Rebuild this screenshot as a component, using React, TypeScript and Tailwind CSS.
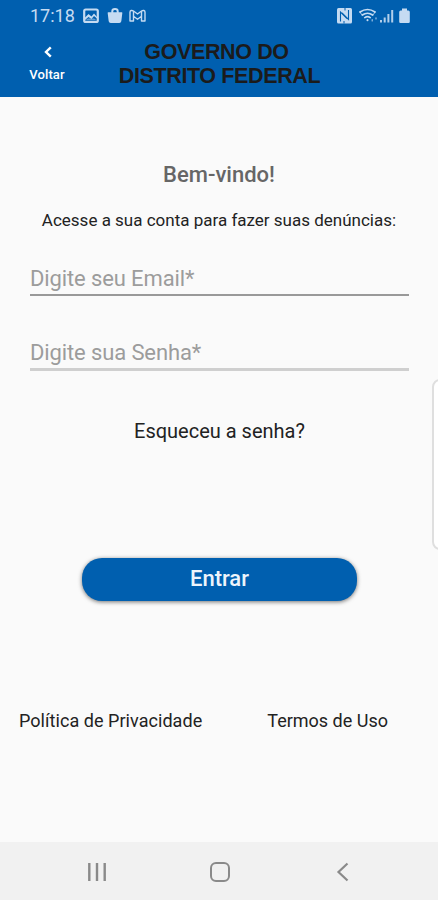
import React, { useState } from "react";

interface FieldProps {
  name: string;
  type: string;
  placeholder: string;
  className: string;
}

const StatusBar = () => {
  return <div className="flex h-8 items-center justify-between pl-[30px] pr-7 text-[#c5dbf2]">
    <div className="flex items-center">
      <span className="w-[53px] text-[18px] leading-8">17:18</span>
      <svg width="16" height="16" viewBox="0 0 16 16" fill="none">
        <rect x="1.200" y="1.500" width="13.600" height="12.500" rx="1.500" stroke="currentColor" strokeWidth="2.200" />
        <path d="M2 9.500 5.500 6l3 2.500L11 5.500l3 3.500v1.500L11 8l-2.500 3L5.500 9 2 12z" fill="currentColor" />
        <path d="M2 12.500 5 10.500h6l3 2z" fill="currentColor" opacity=".5" />
      </svg>
      <svg className="ml-2" width="16" height="16" viewBox="0 0 16 16" fill="none">
        <path d="M5.300 5V3.300a2.700 2.300 0 0 1 5.400 0V5" stroke="currentColor" strokeWidth="2" />
        <path d="M1.200 4.200h13.600q.7 0 .5 1l-1 8q-.3 1.800-2 1.800H3.700q-1.700 0-2-1.800l-1-8q-.2-1 .5-1z" fill="currentColor" />
      </svg>
      <svg className="ml-[6px]" width="17" height="16" viewBox="0 0 17 16" fill="none" stroke="currentColor" strokeWidth="1.400" strokeLinejoin="round">
        <path d="M1 13V4.200C1 2.300 3 2 4.500 3L8.500 6l4-3C14 2 16 2.300 16 4.200V13h-3.500V8.200L8.500 11.200l-4-3V13z" />
        <path d="M4.500 8.200V3M12.500 8.200V3" />
      </svg>
    </div>
    <div className="flex items-center">
      <svg className="mr-[1px]" width="15" height="16" viewBox="0 0 15 16">
        <rect width="15" height="15.500" rx="1.500" fill="currentColor" />
        <path d="M3.500 13.500V4l6.500 6.500M11.500 2v9.500L5 5" fill="none" stroke="#005faf" strokeWidth="1.100" />
        <path d="M8 0v2.500M7 13v2.500" stroke="#005faf" strokeWidth="1" />
      </svg>
      <svg className="ml-[6px]" width="20" height="16" viewBox="0 0 20 16" fill="none" stroke="currentColor" strokeWidth="1.700" strokeLinecap="round">
        <path d="M1 4q7.500-5 15 0M3.300 7q5.200-3.500 10.400 0M5.800 9.600q2.700-1.800 5.400 0" />
        <path d="M1 4q.8 1.800 2.300 3M16 4q-.8 1.800-2.300 3" strokeWidth="1" />
        <path d="M8.500 12v.2" strokeWidth="2" />
        <path d="M13.200 11.500v1.500M17 9.800v1.200" strokeWidth="1.200" opacity=".8" />
      </svg>
      <svg className="ml-[1px]" width="14" height="16" viewBox="0 0 14 16" fill="currentColor">
        <path d="M0 12h2v2.500H0zM3.700 9.500h2v5h-2zM7.400 6h2v8.500h-2zM11.200 2h2v12.500h-2z" opacity=".9" />
      </svg>
      <svg className="ml-[5px]" width="11" height="16" viewBox="0 0 11 16" fill="currentColor">
        <path d="M3 .5h5v2h1.300q1.500 0 1.500 1.500v9.800q0 1.200-1.200 1.200H1.400Q.2 15 .2 13.800V4q0-1.500 1.500-1.500H3z" />
      </svg>
    </div>
  </div>;
};

const Header = () => {
  return <header className="h-[97px] bg-[#005faf]">
    <StatusBar />
    <div className="flex">
      <button className="ml-[29px] flex w-9 flex-col items-center pt-[13px] text-white">
        <svg className="ml-[2px]" width="10" height="14" viewBox="0 0 10 14" fill="none" stroke="currentColor" strokeWidth="2.400">
          <path d="M7.800 2.300 3 7l4.800 4.700" />
        </svg>
        <span className="mt-[7px] whitespace-nowrap text-[13px] font-medium leading-[18px] tracking-[0.1px]">Voltar</span>
      </button>
      <h1 className="ml-[54px] mt-[8px] flex w-[201px] flex-col items-center whitespace-nowrap font-['Liberation_Sans',sans-serif] text-[21.500px] font-bold leading-6 tracking-[-0.380px] text-[#1b1b1b]">
        <span className="mr-[6px]">GOVERNO DO</span>
        <span>DISTRITO FEDERAL</span>
      </h1>
    </div>
  </header>;
};

const Field: React.FC<FieldProps> = ({ name, type, placeholder, className }) => {
  const [value, setValue] = useState("");

  return <input
    name={name}
    type={type}
    value={value}
    placeholder={placeholder}
    onChange={(e) => setValue(e.target.value)}
    className={`block w-full bg-transparent p-0 text-[22px] tracking-[-0.120px] text-[#333] outline-none placeholder:text-[#9c9c9c] ${className}`} />;
};

const NavigationBar = () => {
  return <nav className="flex h-[58px] items-center bg-[#f1f1f1] pt-[2px] text-[#8a8a8a]">
    <svg className="ml-[87px]" width="20" height="20" viewBox="0 0 20 20" stroke="currentColor" strokeWidth="2.400">
      <path d="M2.300 1v18M10 1v18M17.700 1v18" />
    </svg>
    <svg className="ml-[102px]" width="22" height="22" viewBox="0 0 22 22" fill="none" stroke="currentColor" strokeWidth="2">
      <rect x="2" y="2" width="18" height="18" rx="5" />
    </svg>
    <svg className="ml-[105px]" width="14" height="20" viewBox="0 0 14 20" fill="none" stroke="currentColor" strokeWidth="2.200">
      <path d="M11.500 1.500 2.500 10l9 8.500" />
    </svg>
  </nav>;
};

export default function App() {
  return <div className="relative flex h-[900px] w-[438px] flex-col overflow-hidden bg-[#fafafa] font-['Roboto',sans-serif]">
    <Header />
    <main className="flex flex-1 flex-col">
      <h2 className="mt-[63px] text-center text-[22px] font-medium leading-[30px] text-[#666]">Bem-vindo!</h2>
      <p className="mt-[18px] whitespace-nowrap text-center text-[17px] leading-6 text-[#222]">Acesse a sua conta para fazer suas denúncias:</p>
      <form className="flex flex-col pl-[30px] pr-[29px] pt-[31px]" onSubmit={(e) => e.preventDefault()}>
        <Field name="email" type="email" placeholder="Digite seu Email*" className="h-[33px] border-b-2 border-[#999] pb-[1px]" />
        <Field name="senha" type="password" placeholder="Digite sua Senha*" className="mt-[42px] h-[33px] border-b-[3px] border-[#cfcfcf] pb-[1px]" />
        <a href="#" className="mt-[46px] self-center text-[20px] leading-7 text-[#222]">Esqueceu a senha?</a>
        <button type="submit" className="mt-[113px] flex h-[43px] w-[275px] justify-center self-center rounded-[20px] bg-[#005faf] pt-[6px] text-[22px] font-medium leading-[30px] text-[#eef4fb] shadow-[0_1px_4px_rgba(0,0,0,0.55)]">Entrar</button>
      </form>
      <div className="mt-[108px] flex justify-between pl-[19px] pr-[50px] text-[18px] leading-6 text-[#222]">
        <a href="#" className="tracking-[0.050px]">Política de Privacidade</a>
        <a href="#">Termos de Uso</a>
      </div>
    </main>
    <NavigationBar />
    <div className="absolute right-[-10px] top-[379px] h-[171px] w-4 rounded-[8px] border-2 border-[#dfdfdf] bg-white" />
  </div>;
}
